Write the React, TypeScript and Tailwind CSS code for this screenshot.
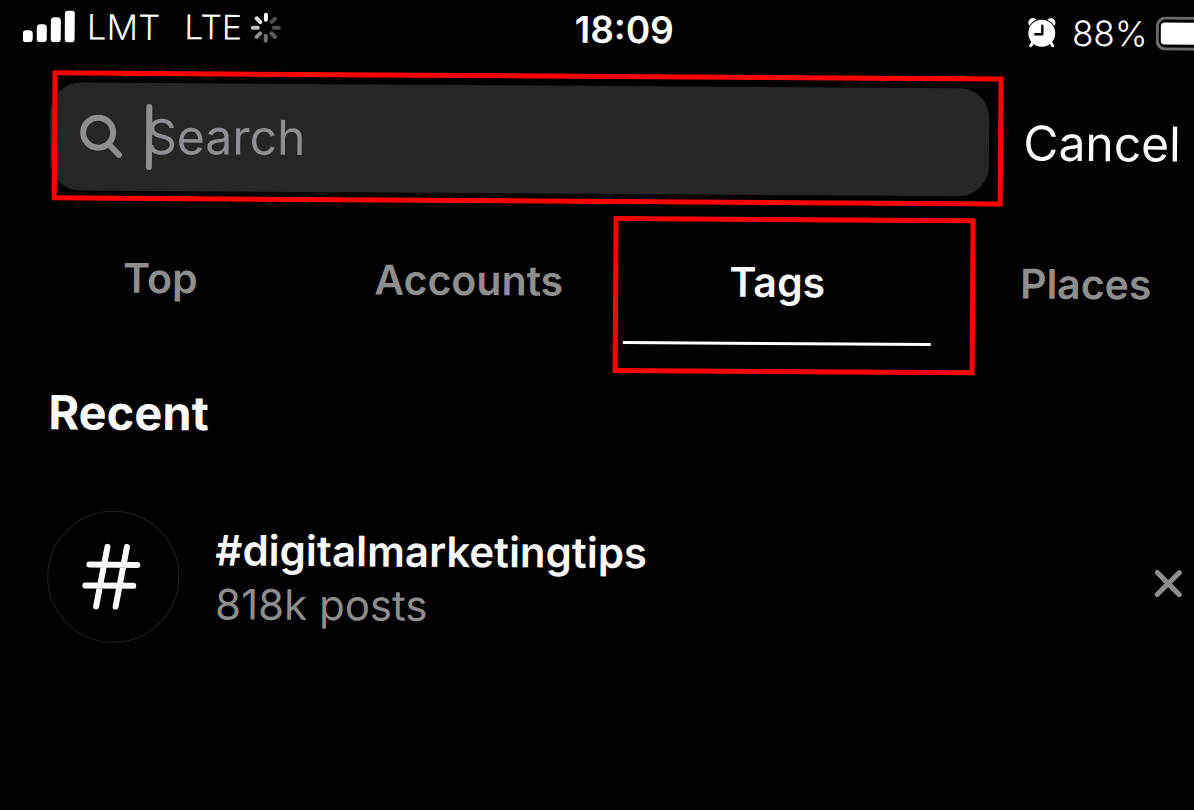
import React, { useState } from 'react';

const tabs = ['Top', 'Accounts', 'Tags', 'Places'];

const recentTags = [{ name: '#digitalmarketingtips', posts: '818k posts' }];

// petals of the activity spinner, clockwise from the top
const petals = [1, 0.3, 0.3, 0.36, 0.44, 0.56, 0.75, 0.9];

const Highlight: React.FC<{ className: string }> = ({ className }) => (
  <span
    aria-hidden="true"
    className={`pointer-events-none absolute border-[5px] border-[#ff0000] ${className}`}
  />
);

const SignalIcon = () => (
  <svg width="52" height="32" viewBox="0 0 52 32" fill="#fff">
    <rect x="0" y="20" width="10" height="12" rx="3.5" />
    <rect x="14" y="14" width="10" height="18" rx="3.5" />
    <rect x="28" y="7" width="10" height="25" rx="3.5" />
    <rect x="42" y="0" width="10" height="32" rx="3.5" />
  </svg>
);

const Spinner = () => (
  <svg width="32" height="32" viewBox="-16 -16 32 32">
    {petals.map((opacity, i) => (
      <line
        key={i}
        y1="-13"
        y2="-8"
        stroke="#fff"
        strokeWidth="4"
        strokeLinecap="round"
        opacity={opacity}
        transform={`rotate(${i * 45})`}
      />
    ))}
  </svg>
);

const AlarmIcon = () => (
  <svg width="28" height="30" viewBox="0 0 28 30">
    <circle cx="5" cy="5" r="4.6" fill="#fff" />
    <circle cx="23" cy="5" r="4.6" fill="#fff" />
    <circle cx="14" cy="15.5" r="14.5" fill="#000" />
    <circle cx="14" cy="15.5" r="13.5" fill="#fff" />
    <path d="M5 25 3 28M23 25l2 3" stroke="#fff" strokeWidth="3" strokeLinecap="round" />
    <path d="M14.5 8v8.5H7.5" fill="none" stroke="#000" strokeWidth="2.4" strokeLinecap="round" strokeLinejoin="round" />
  </svg>
);

const BatteryIcon = () => (
  <svg width="70" height="34" viewBox="0 0 70 34">
    <rect x="1.5" y="1.5" width="64" height="31" rx="8" fill="none" stroke="#6b6b6b" strokeWidth="3" />
    <rect x="5" y="6" width="50" height="22" rx="4" fill="#fff" />
  </svg>
);

const HashIcon = () => (
  <svg width="62" height="66" viewBox="0 0 62 66" stroke="#fafafa" strokeWidth="6" strokeLinecap="round">
    <path d="M25 3 14 63M44.500 3 33.500 63M7 21h48M3 42h48" />
  </svg>
);

const StatusBar = () => (
  <header className="grid h-[52px] grid-cols-[1fr_auto_1fr] items-center pr-4 pl-[23px] text-[35px] leading-10 text-white">
    <div className="flex items-center gap-3">
      <SignalIcon />
      <span className="font-light">LMT</span>
      <div className="ml-3 flex items-center gap-2">
        <span className="text-[34px] font-light">LTE</span>
        <Spinner />
      </div>
    </div>
    <time className="text-[37px] font-semibold">18:09</time>
    <div className="flex items-center justify-end gap-2">
      <AlarmIcon />
      <span className="ml-2 font-light">88%</span>
      <BatteryIcon />
    </div>
  </header>
);

export default function App() {
  const [active, setActive] = useState('Tags');
  const [query, setQuery] = useState('');
  const [recent, setRecent] = useState(recentTags);

  return (
    <div className="min-h-screen overflow-hidden bg-black font-['Inter',sans-serif]">
      <div className="w-[104%] origin-top-left rotate-[0.37deg]">
        <StatusBar />

        <form className="mt-[30px] flex items-center gap-[34px] pr-[60px] pl-[51px]" onSubmit={(e) => e.preventDefault()}>
          <div className="relative flex h-[108px] min-w-0 flex-1 items-center gap-[22px] rounded-[30px] bg-[#262626] pl-[30px]">
            <svg className="shrink-0" width="44" height="44" viewBox="0 0 44 44" fill="none" stroke="#8e8e8e" strokeWidth="6" strokeLinecap="round">
              <circle cx="18" cy="18" r="15" />
              <path d="m29 30 10 10" />
            </svg>
            <input
              type="text"
              aria-label="Search"
              placeholder="Search"
              value={query}
              onChange={(e) => setQuery(e.target.value)}
              className="h-16 min-w-0 flex-1 bg-transparent text-[48px] text-white outline-none placeholder:text-[#8e8e93]"
            />
            <span aria-hidden="true" className="absolute left-24 h-[66px] w-[6px] rounded-full bg-[#8e8e8e]" />
            <Highlight className="-top-3 -right-3.5 -bottom-2.5 left-0.5" />
          </div>
          <button type="button" className="pt-0.5 text-[48px] leading-[60px] text-[#fafafa]">
            Cancel
          </button>
        </form>

        <nav className="mt-7 grid grid-cols-4 pl-2 text-[41px] leading-[50px] font-semibold">
          {tabs.map((tab) => (
            <button
              key={tab}
              type="button"
              onClick={() => setActive(tab)}
              className={`relative border-b-[3px] pt-[34px] pb-[35px] ${
                tab === active ? 'border-white text-[#fafafa]' : 'border-transparent text-[#8e8e8e]'
              }`}
            >
              {tab}
              {tab === active && <Highlight className="-top-1.5 -right-11 -bottom-8 -left-2.5" />}
            </button>
          ))}
        </nav>

        <main className="pr-14 pl-[51px]">
          <h2 className="mt-11 text-[47px] leading-[56px] font-bold text-[#fafafa]">Recent</h2>
          <ul className="mt-[70px]">
            {recent.map((tag) => (
              <li key={tag.name} className="flex items-center gap-9">
                <div className="flex h-[132px] w-[132px] shrink-0 items-center justify-center rounded-full border border-[#1f1f1f]">
                  <HashIcon />
                </div>
                <div className="flex-1 text-[42px] leading-[54px]">
                  <p className="font-semibold text-[#fafafa]">{tag.name}</p>
                  <p className="text-[#8e8e8e]">{tag.posts}</p>
                </div>
                <button
                  type="button"
                  aria-label="Remove"
                  onClick={() => setRecent(recent.filter((t) => t !== tag))}
                >
                  <svg width="28" height="28" viewBox="0 0 28 28" stroke="#8e8e8e" strokeWidth="5" strokeLinecap="round">
                    <path d="m3 3 22 22M25 3 3 25" />
                  </svg>
                </button>
              </li>
            ))}
          </ul>
        </main>
      </div>
    </div>
  );
}
